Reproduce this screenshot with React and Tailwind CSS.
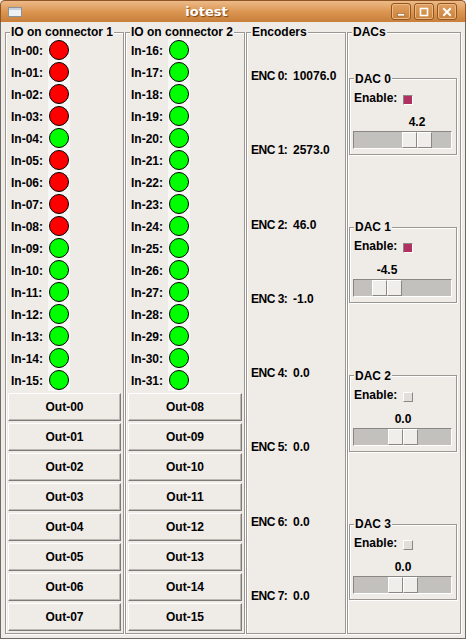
import React from "react";

const bank1 = [1, 1, 1, 1, 0, 1, 1, 1, 1, 0, 0, 0, 0, 0, 0, 0]; // 1 = red (on)
const bank2 = new Array(16).fill(0);

const encoders = ["10076.0", "2573.0", "46.0", "-1.0", "0.0", "0.0", "0.0", "0.0"];

const dacs = [
  { value: 4.2, label: "4.2", enabled: true },
  { value: -4.5, label: "-4.5", enabled: true },
  { value: 0, label: "0.0", enabled: false },
  { value: 0, label: "0.0", enabled: false },
];

function Frame({ title, className, children }) {
  return (
    <fieldset
      className={
        "min-w-0 border border-[#9a9691] shadow-[inset_1px_1px_0_#ffffff,1px_1px_0_#ffffff] " +
        className
      }
    >
      <legend className="ml-[4px] px-[1px] leading-[14px] bg-[#efebe7] whitespace-nowrap">{title}</legend>
      {children}
    </fieldset>
  );
}

function Led({ on }) {
  return (
    <div className="w-[22px] h-[22px] bg-[#f7f7f6] flex items-center justify-center">
      <div
        className={
          on
            ? "w-[20px] h-[20px] rounded-full border border-black bg-[#ff0000]"
            : "w-[20px] h-[20px] rounded-full border border-black bg-[#00ff00]"
        }
      />
    </div>
  );
}

function IoColumn({ title, start, states, outStart, className }) {
  return (
    <Frame title={title} className={"flex flex-col " + className}>
      <div className="flex flex-col pl-[5px]">
        {states.map((s, i) => (
          <div key={i} className="h-[22px] flex items-center">
            <span className="w-[37px] mt-[1px]">
              In-{String(start + i).padStart(2, "0")}:
            </span>
            <Led on={s === 1} />
          </div>
        ))}
      </div>
      <div className="flex flex-col gap-[2px] px-[2px] mt-[2px]">
        {Array.from({ length: 8 }).map((_, i) => (
          <button
            key={i}
            className="h-[28px] flex items-center justify-center bg-[#efebe7] border border-t-white border-l-white border-r-[#7d7a76] border-b-[#7d7a76] shadow-[inset_-1px_-1px_0_#bcb8b3]"
          >
            Out-{String(outStart + i).padStart(2, "0")}
          </button>
        ))}
      </div>
    </Frame>
  );
}

function Dac({ index, value, label, enabled }) {
  const offset = Math.round(((value + 10) / 20) * 67);
  return (
    <fieldset className="w-[108px] min-w-0 border border-[#9a9691] shadow-[inset_1px_1px_0_#ffffff,1px_1px_0_#ffffff] pb-[5px]">
      <legend className="ml-[4px] px-[1px] leading-[14px] bg-[#efebe7]">DAC {index}</legend>
      <div className="mt-[5px] pl-[4px] h-[14px] flex items-start leading-[14px]">
        <span className="w-[49px]">Enable:</span>
        <div
          className={
            enabled
              ? "mt-[4px] w-[10px] h-[10px] bg-[#b03060] border border-t-[#8a8784] border-l-[#8a8784] border-r-white border-b-white"
              : "mt-[4px] w-[10px] h-[10px] bg-[#e2dfda] border border-t-white border-l-white border-r-[#8a8784] border-b-[#8a8784]"
          }
        />
      </div>
      <div className="mt-[10px] ml-[3px] h-[14px] flex leading-[14px]">
        <div style={{ width: offset + 1 }} />
        <div className="w-[30px] text-center">{label}</div>
      </div>
      <div className="mt-[2px] ml-[3px] w-[99px] h-[18px] flex bg-[#c3c1bd] border border-t-[#8a8784] border-l-[#8a8784] border-r-white border-b-white">
        <div style={{ width: offset }} />
        <div className="w-[30px] h-full flex">
          <div className="w-[15px] h-full bg-[#f0eeeb] border border-t-white border-l-white border-r-[#8a8784] border-b-[#8a8784]" />
          <div className="w-[15px] h-full bg-[#f0eeeb] border border-t-white border-l-white border-r-[#8a8784] border-b-[#8a8784]" />
        </div>
      </div>
    </fieldset>
  );
}

function TitleButton({ children }) {
  return (
    <div className="w-[20px] h-[17px] rounded-[3px] border border-[#93561f] shadow-[inset_0_0_0_1px_#ebb987] bg-gradient-to-b from-[#e1a162] to-[#c98139] flex items-center justify-center">
      {children}
    </div>
  );
}

export default function App() {
  return (
    <div className="w-[466px] h-[639px] flex flex-col bg-[#efebe7] overflow-hidden font-['Liberation_Sans',Arial,sans-serif] font-bold text-[12px] leading-[14px] text-black">
      {/* Title bar */}
      <div className="h-[22px] flex items-center rounded-t-[5px] bg-gradient-to-b from-[#ecba88] via-[#dc9752] to-[#c77f3a] border-t border-x border-[#8f5524] pl-[7px] pr-[8px]">
        <div className="w-[14px] h-[10px] bg-[#eef1f4] border border-[#8b929b] shadow-[inset_0_2px_0_#c9d2dc]" />
        <div className="flex-1 text-center text-white font-['DejaVu_Sans',sans-serif] text-[13px] font-bold [text-shadow:1px_1px_1px_#7a4519]">
          iotest
        </div>
        <div className="flex gap-[3px]">
          <TitleButton>
            <svg width="10" height="10" viewBox="0 0 10 10">
              <rect x="1.5" y="6.5" width="7" height="2.5" fill="#fff" stroke="#9a5c26" strokeWidth="0.6" />
            </svg>
          </TitleButton>
          <TitleButton>
            <svg width="10" height="10" viewBox="0 0 10 10">
              <rect x="1.5" y="1.5" width="7" height="7" fill="none" stroke="#fff" strokeWidth="1.6" />
            </svg>
          </TitleButton>
          <TitleButton>
            <svg width="10" height="10" viewBox="0 0 10 10">
              <path d="M2 2 L8 8 M8 2 L2 8" stroke="#fff" strokeWidth="2" strokeLinecap="square" />
            </svg>
          </TitleButton>
        </div>
      </div>

      {/* Body */}
      <div className="flex-1 flex gap-[1px] border-x border-b border-[#6f6b66] pl-[4px] pr-[4px] pt-[3px] pb-[4px]">
        <IoColumn title="IO on connector 1" start={0} states={bank1} outStart={0} className="w-[119px] shrink-0" />
        <IoColumn title="IO on connector 2" start={16} states={bank2} outStart={8} className="w-[120px] shrink-0" />

        <Frame title="Encoders" className="w-[100px] shrink-0 flex flex-col">
          {encoders.map((v, i) => (
            <div key={i} className="flex-1 flex items-center pl-[4px]">
              <span className="w-[42px] tracking-[-0.5px]">ENC {i}:</span>
              <span>{v}</span>
            </div>
          ))}
        </Frame>

        <Frame title="DACs" className="w-[114px] shrink-0 flex flex-col">
          {dacs.map((d, i) => (
            <div key={i} className="flex-1 flex flex-col justify-center pl-[1px]">
              <Dac index={i} {...d} />
            </div>
          ))}
        </Frame>
      </div>
    </div>
  );
}
